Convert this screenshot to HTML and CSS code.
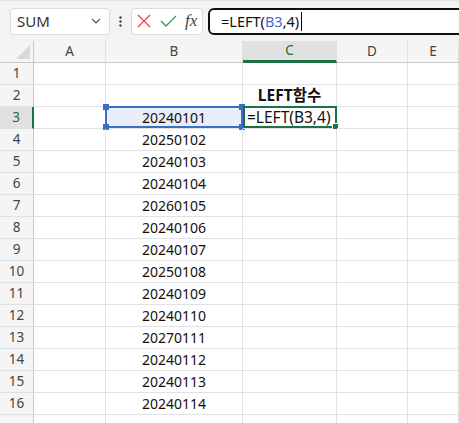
FILE: index.html
```html
<!DOCTYPE html>
<html lang="ko">
<head>
  <meta charset="UTF-8">
  <title>LEFT함수</title>
  <link rel="stylesheet" href="styles.css">
</head>
<body>

<div class="toolbar">
  <div class="namebox">
    <span>SUM</span>
    <svg class="chev" width="10" height="6" viewBox="0 0 10 6"><path d="M1 1l4 4 4-4" fill="none" stroke="#555" stroke-width="1.2"/></svg>
  </div>
  <svg class="grip" width="3" height="11" viewBox="0 0 3 11"><circle cx="1.5" cy="1.5" r="1.2" fill="#444"/><circle cx="1.5" cy="5.5" r="1.2" fill="#444"/><circle cx="1.5" cy="9.5" r="1.2" fill="#444"/></svg>
  <div class="fxbtns">
    <svg width="14" height="14" viewBox="0 0 14 14"><path d="M1 1l12 12M13 1L1 13" stroke="#e5484d" stroke-width="1.4"/></svg>
    <svg width="17" height="12" viewBox="0 0 17 12"><path d="M1 6l5 5L16 1" fill="none" stroke="#3f9b5f" stroke-width="1.4"/></svg>
    <span class="fx">fx</span>
  </div>
  <div class="formula">
    <span>=LEFT(</span><span class="refname">B3</span><span>,4)</span><span class="caret"></span>
  </div>
</div>

<div class="sheet">
  <div class="corner"><i></i></div>
  <div class="colhead">A</div>
  <div class="colhead">B</div>
  <div class="colhead active">C</div>
  <div class="colhead">D</div>
  <div class="colhead">E</div>

  <div class="rowhead">1</div><div class="cell"></div><div class="cell"></div><div class="cell"></div><div class="cell"></div><div class="cell"></div>
  <div class="rowhead">2</div><div class="cell"></div><div class="cell"></div><div class="cell title">LEFT함수</div><div class="cell"></div><div class="cell"></div>
  <div class="rowhead active">3</div><div class="cell"></div><div class="cell num ref">20240101</div><div class="cell editing">=LEFT(B3,4)</div><div class="cell"></div><div class="cell"></div>
  <div class="rowhead">4</div><div class="cell"></div><div class="cell num">20250102</div><div class="cell"></div><div class="cell"></div><div class="cell"></div>
  <div class="rowhead">5</div><div class="cell"></div><div class="cell num">20240103</div><div class="cell"></div><div class="cell"></div><div class="cell"></div>
  <div class="rowhead">6</div><div class="cell"></div><div class="cell num">20240104</div><div class="cell"></div><div class="cell"></div><div class="cell"></div>
  <div class="rowhead">7</div><div class="cell"></div><div class="cell num">20260105</div><div class="cell"></div><div class="cell"></div><div class="cell"></div>
  <div class="rowhead">8</div><div class="cell"></div><div class="cell num">20240106</div><div class="cell"></div><div class="cell"></div><div class="cell"></div>
  <div class="rowhead">9</div><div class="cell"></div><div class="cell num">20240107</div><div class="cell"></div><div class="cell"></div><div class="cell"></div>
  <div class="rowhead">10</div><div class="cell"></div><div class="cell num">20250108</div><div class="cell"></div><div class="cell"></div><div class="cell"></div>
  <div class="rowhead">11</div><div class="cell"></div><div class="cell num">20240109</div><div class="cell"></div><div class="cell"></div><div class="cell"></div>
  <div class="rowhead">12</div><div class="cell"></div><div class="cell num">20240110</div><div class="cell"></div><div class="cell"></div><div class="cell"></div>
  <div class="rowhead">13</div><div class="cell"></div><div class="cell num">20270111</div><div class="cell"></div><div class="cell"></div><div class="cell"></div>
  <div class="rowhead">14</div><div class="cell"></div><div class="cell num">20240112</div><div class="cell"></div><div class="cell"></div><div class="cell"></div>
  <div class="rowhead">15</div><div class="cell"></div><div class="cell num">20240113</div><div class="cell"></div><div class="cell"></div><div class="cell"></div>
  <div class="rowhead">16</div><div class="cell"></div><div class="cell num">20240114</div><div class="cell"></div><div class="cell"></div><div class="cell"></div>
  <div class="rowhead"></div><div class="cell"></div><div class="cell"></div><div class="cell"></div><div class="cell"></div><div class="cell"></div>
</div>

</body>
</html>
```

FILE: styles.css
```css
body {
  margin: 0;
  font-family: "Noto Sans", "Noto Sans CJK KR", sans-serif;
  background: #fff;
  color: #111;
  overflow: hidden;
}

/* Formula bar row */
.toolbar {
  display: flex;
  align-items: center;
  height: 41px;
  padding: 0 0 0 10px;
  background: #f3f3f3;
  border-top: 1px solid #e3e3e3;
  box-sizing: border-box;
}

.namebox {
  width: 100px;
  height: 27px;
  box-sizing: border-box;
  display: flex;
  align-items: center;
  justify-content: space-between;
  padding: 0 8px 0 6px;
  background: #fff;
  border: 1px solid #dcdcdc;
  border-radius: 4px;
  font-size: 15px;
  color: #333;
}

.grip {
  margin: 0 9px 0 9px;
}

.fxbtns {
  width: 72px;
  height: 27px;
  box-sizing: border-box;
  display: flex;
  align-items: center;
  gap: 9px;
  padding: 0 0 0 5px;
  background: #fff;
  border: 1px solid #dcdcdc;
  border-radius: 4px;
}

.fx {
  font-family: "Liberation Serif", serif;
  font-style: italic;
  font-size: 17px;
  color: #444;
  margin-left: -1px;
}

.formula {
  flex: 1;
  height: 27px;
  margin-left: 5px;
  margin-right: -10px;
  box-sizing: border-box;
  display: flex;
  align-items: center;
  padding-left: 11px;
  background: #fff;
  border: 2px solid #111;
  border-radius: 6px;
  font-size: 14.5px;
  color: #111;
}

.refname {
  color: #3a6fd0;
}

.caret {
  width: 1px;
  height: 19px;
  margin-left: 2px;
  background: #000;
}

/* Grid */
.sheet {
  display: grid;
  grid-template-columns: 34px 72px 137px 94px 71px 1fr;
  grid-template-rows: 22px;
  grid-auto-rows: 22px;
  font-size: 14px;
}

.corner {
  background: #f5f5f5;
  border-right: 1px solid #c8c8c8;
  border-bottom: 1px solid #c8c8c8;
  display: flex;
  align-items: flex-end;
  justify-content: flex-end;
  padding: 0 3px 3px 0;
}

.corner i {
  width: 14px;
  height: 14px;
  background: #d9d9d9;
  clip-path: polygon(100% 0, 100% 100%, 0 100%);
}

.colhead {
  background: #f5f5f5;
  border-right: 1px solid #e1e1e1;
  border-bottom: 1px solid #c8c8c8;
  text-align: center;
  line-height: 21px;
  font-size: 13.5px;
  color: #444;
}

.colhead.active {
  background: #e1e1e1;
  color: #1e6b41;
  border-bottom: 3px solid #1e7145;
  line-height: 19px;
}

.rowhead {
  background: #f5f5f5;
  border-right: 1px solid #c8c8c8;
  border-bottom: 1px solid #e1e1e1;
  text-align: center;
  line-height: 21px;
  font-size: 13.5px;
  color: #444;
}

.rowhead.active {
  background: #e1e1e1;
  color: #1e6b41;
  border-right: 2px solid #1e7145;
}

.cell {
  border-right: 1px solid #e1e1e1;
  border-bottom: 1px solid #e1e1e1;
  line-height: 21px;
  white-space: nowrap;
  position: relative;
}

.num {
  text-align: center;
}

.title {
  text-align: center;
  font-weight: bold;
  font-size: 15.5px;
}

/* Referenced range (blue) */
.ref {
  background: #e9eef8;
}

.ref::before {
  content: '';
  position: absolute;
  top: -1px;
  left: -1px;
  right: -1px;
  bottom: 0;
  border: 2px solid #3a6fc4;
}

.ref::after {
  content: '';
  position: absolute;
  top: -3px;
  left: -3px;
  right: -3px;
  bottom: -2px;
  background:
    linear-gradient(#3a6fc4, #3a6fc4) left top / 6px 6px no-repeat,
    linear-gradient(#3a6fc4, #3a6fc4) right top / 6px 6px no-repeat,
    linear-gradient(#3a6fc4, #3a6fc4) left bottom / 6px 6px no-repeat,
    linear-gradient(#3a6fc4, #3a6fc4) right bottom / 6px 6px no-repeat;
}

/* Active cell (green) */
.editing {
  font-size: 15.5px;
  padding-left: 4px;
  overflow: visible;
}

.editing::before {
  content: '';
  position: absolute;
  top: -1px;
  left: 0;
  right: -1px;
  bottom: 0;
  border: 2px solid #1e7145;
}

.editing::after {
  content: '';
  position: absolute;
  right: -3px;
  bottom: -2px;
  width: 5px;
  height: 5px;
  background: #1e7145;
  border: 1px solid #fff;
}
```
